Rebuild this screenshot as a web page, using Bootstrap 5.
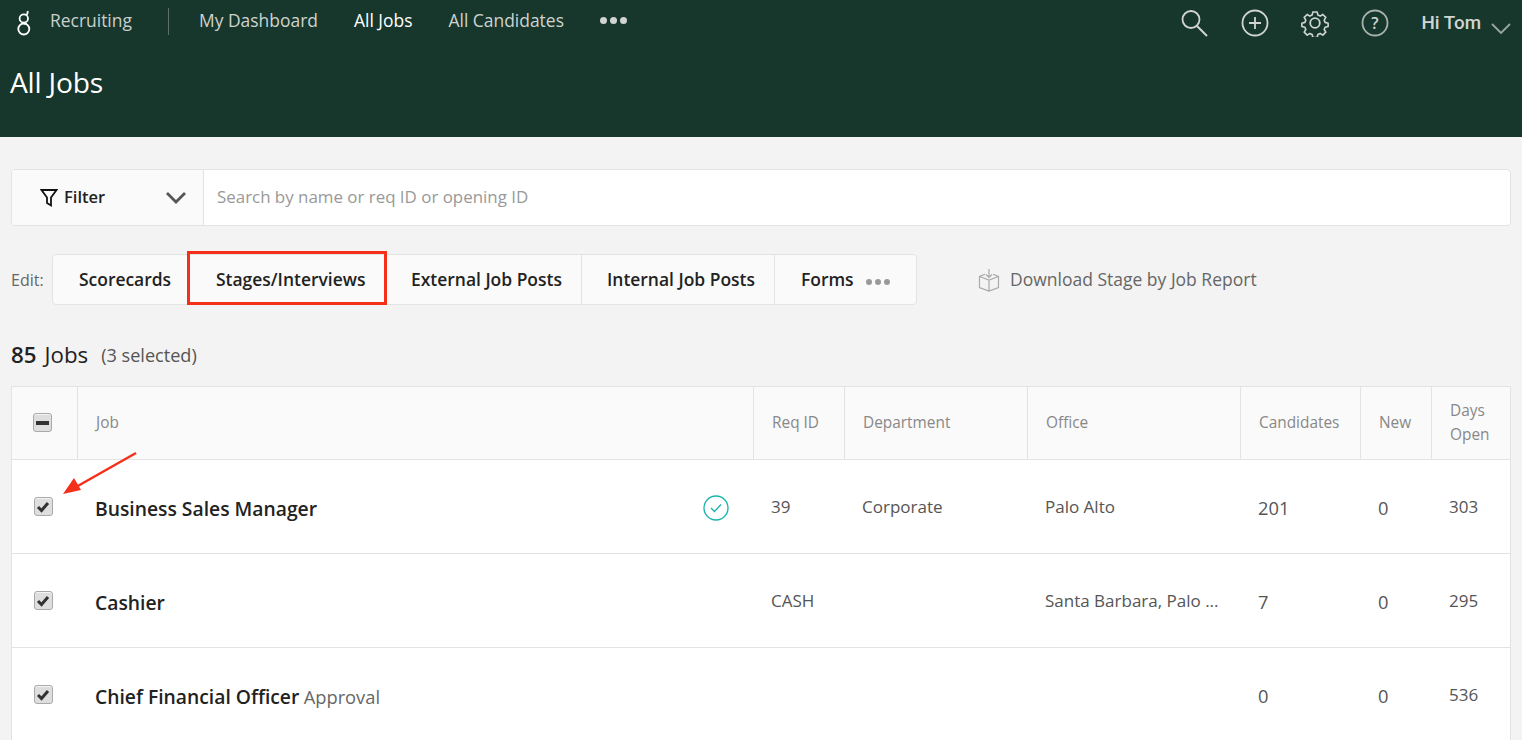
<!DOCTYPE html>
<html lang="en">
<head>
<meta charset="utf-8">
<title>All Jobs</title>
<link href="https://cdn.jsdelivr.net/npm/bootstrap@5.3.0/dist/css/bootstrap.min.css" rel="stylesheet">
<style>
html,body{height:740px;overflow:hidden}
body{background:#f3f3f3;font-family:"Open Sans",sans-serif;color:#222;position:relative}
.gh-head{background:#17372c;height:137px;padding:0 10px}
.gh-top{height:41px;color:#d0d5d2;font-size:17.45px}
.gh-logo{margin:0 0 0 7px;width:14px;height:30px}
.gh-app{margin-left:19px;width:118px;color:#c9cfcc}
.gh-sep{width:1px;height:27px;background:#5a6f67;margin:1px 30px 0 0}
.gh-link{color:#ced3d0;text-decoration:none;margin-right:36px}
.gh-link.is-on{color:#fff}
.gh-dots{display:flex;gap:3px;margin-top:-1px}
.gh-dots i{width:7px;height:7px;border-radius:50%;background:#d0d5d2}
.gh-hi{font-family:Roboto,sans-serif;font-weight:500;font-size:18.8px;color:#d0d5d2;margin-left:32px;margin-right:1px;margin-top:5px}
.gh-title{font-size:28.2px;line-height:36px;color:#fff;margin-top:23px;letter-spacing:-.2px}
.gh-tools{gap:32px;margin-top:4px}
.gh-main{padding:32px 11px 0 11px}
.gh-search{height:57px;background:#fff;border:1px solid #e3e3e3;border-radius:4px;overflow:hidden}
.gh-filter{width:192px;background:#fafafa;border-right:1px solid #e3e3e3;padding:0 16px 0 28px;font-weight:600;font-size:16.5px;color:#222}
.gh-funnel{margin-right:6px}
.gh-ph{padding:0 0 2px 13px;color:#999;font-size:16.9px}
.gh-editrow{margin-top:28px;height:51px}
.gh-edit-label{width:41px;font-size:16px;color:#666}
.gh-tabs{height:51px;background:#fafafa;border:1px solid #e3e3e3;border-radius:4px;font-weight:600;font-size:17.45px;color:#222}
.gh-tab{display:flex;align-items:center;height:100%;border-right:1px solid #e3e3e3;white-space:nowrap}
.gh-tab.t-a{width:135px;padding-left:26px;border-right:0}
.gh-tab.t-b{width:198px;padding:3px 0 0 28px;outline:3px solid #f5301a;outline-offset:-2px;height:52px;border:0;z-index:1;align-self:flex-start;margin-top:-3px}
.gh-tab.t-c{width:196px;padding-left:25px}
.gh-tab.t-d{width:193px;padding-left:25px}
.gh-tab.t-e{width:141px;padding-left:26px;border:0;gap:12px}
.gh-dots.g-s{gap:3px;margin-top:4px}
.gh-dots.g-s i{background:#999;width:6px;height:6px}
.gh-dl{margin-left:61px;font-size:17.5px;color:#666;gap:10px}
.gh-count{margin-top:34px;height:32px;font-size:22.300px;color:#222}
.gh-count b{font-weight:600;margin-right:8px}
.gh-count span{font-size:18.100px;color:#555;margin-left:13px;margin-top:2px}
.gh-table{table-layout:fixed;width:1498px;margin:15px 0 0 0;background:#fff;border:1px solid #e3e3e3;border-collapse:separate;border-spacing:0;--bs-table-bg:transparent}
.gh-table th{background:#fafafa;height:73px;font-weight:400;font-size:15.4px;line-height:24px;color:#888;border-right:1px solid #e3e3e3;border-bottom:1px solid #e3e3e3;padding:0 0 0 18px;vertical-align:middle}
.gh-table th:last-child{border-right:0}
.gh-table td{height:94px;border-bottom:1px solid #e3e3e3;padding:0 0 0 17px;vertical-align:middle;font-size:17px;color:#555;white-space:nowrap;overflow:hidden}
.gh-table td.gh-num{font-size:18.3px}
.gh-table td.gh-check,.gh-table th.gh-check{padding:0 4px 0 0;text-align:center}
.gh-table th.gh-check{padding-bottom:6px}
.gh-name{display:inline-block;padding-top:6px;font-weight:600;font-size:19.3px;color:#222}
.gh-sub{font-size:18.3px;color:#666}
.gh-jobcell{display:flex;align-items:center;justify-content:space-between;padding-right:25px}
.gh-tick{margin-top:2px}
.gh-box{display:inline-flex;width:19px;height:19px;border-radius:3px;background:#dedede;border:1px solid #aaa;align-items:center;justify-content:center;box-shadow:inset 0 1px 0 #f4f4f4}
.gh-trunc{display:block;white-space:nowrap}
.gh-arrow{position:absolute;left:60px;top:450px}
.gh-shift{position:relative;top:1px}
</style>
</head>
<body>
<header class="gh-head">
  <div class="gh-top d-flex align-items-center">
    <svg class="gh-logo" viewBox="0 0 14 30" fill="none" stroke="#fff" stroke-width="1.800"><circle cx="6.800" cy="12.500" r="4.200"/><circle cx="6.800" cy="23" r="5.500"/><path d="M6.800 16.700c3 .6 3 1 0 1M9 9.200c1.500-1 2-2 1.600-4.200"/></svg>
    <div class="gh-app">Recruiting</div>
    <div class="gh-sep"></div>
    <a class="gh-link" href="#">My Dashboard</a>
    <a class="gh-link is-on" href="#">All Jobs</a>
    <a class="gh-link" href="#">All Candidates</a>
    <div class="gh-dots"><i></i><i></i><i></i></div>
    <div class="ms-auto d-flex align-items-center gh-tools">
      <svg width="30" height="30" viewBox="0 0 30 30" fill="none" stroke="#d0d5d2" stroke-width="1.800"><circle cx="12" cy="11.500" r="8.500"/><path d="M18 18l10 10" stroke-width="2"/></svg>
      <svg width="28" height="28" viewBox="0 0 28 28" fill="none" stroke="#d0d5d2" stroke-width="1.800"><circle cx="14" cy="14" r="12.500"/><path d="M14 8v12M8 14h12"/></svg>
      <svg width="28" height="28" viewBox="0 0 28 28" fill="none" stroke="#d0d5d2" stroke-width="1.800" stroke-linejoin="round"><circle cx="14" cy="14" r="4.800"/><path d="M11.600 1.800h4.800l.8 3.400 2.500 1.100 3-1.800 3.300 3.300-1.800 3 1 2.500 3.400.9v3.600l-3.400.9-1 2.500 1.800 3-3.300 3.300-3-1.800-2.500 1.100-.8 3.300h-4.800l-.8-3.300-2.500-1.100-3 1.800-3.300-3.300 1.800-3-1-2.500-3.400-.9v-3.600l3.400-.9 1-2.500-1.800-3 3.300-3.300 3 1.800 2.500-1.100z" transform="translate(1.400 1.400) scale(.9)"/></svg>
      <svg width="28" height="28" viewBox="0 0 28 28" fill="none" stroke="#a9b1ad" stroke-width="1.800"><circle cx="14" cy="14" r="12.500"/><text x="14" y="19.500" text-anchor="middle" font-size="16" font-family="Open Sans" font-weight="600" fill="#d0d5d2" stroke="none">?</text></svg>
    </div>
    <div class="gh-hi">Hi Tom</div>
    <svg class="ms-2 mt-3" width="22" height="14" viewBox="0 0 22 14" fill="none" stroke="#9aa5a0" stroke-width="1.800"><path d="M2 2l9 9 9-9"/></svg>
  </div>
  <div class="gh-title">All Jobs</div>
</header>
<main class="gh-main">
  <div class="gh-search d-flex align-items-stretch">
    <div class="gh-filter d-flex align-items-center">
      <svg width="18" height="20" viewBox="0 0 18 20" fill="none" stroke="#111" stroke-width="1.800" class="gh-funnel"><path d="M1.500 2h15l-5.500 7.500v8l-4-2.500v-5.500z"/></svg>
      Filter
      <svg class="ms-auto" width="22" height="14" viewBox="0 0 22 14" fill="none" stroke="#555" stroke-width="2.800"><path d="M2 2l9 9 9-9"/></svg>
    </div>
    <div class="gh-ph d-flex align-items-center flex-grow-1">Search by name or req ID or opening ID</div>
  </div>
  <div class="gh-editrow d-flex align-items-center">
    <div class="gh-edit-label">Edit:</div>
    <div class="gh-tabs d-flex align-items-center">
      <div class="gh-tab t-a">Scorecards</div>
      <div class="gh-tab t-b">Stages/Interviews</div>
      <div class="gh-tab t-c">External Job Posts</div>
      <div class="gh-tab t-d">Internal Job Posts</div>
      <div class="gh-tab t-e">Forms <div class="gh-dots g-s"><i></i><i></i><i></i></div></div>
    </div>
    <div class="gh-dl d-flex align-items-center">
      <svg width="22" height="24" viewBox="0 0 22 24" fill="none" stroke="#aaa" stroke-width="1.200"><path d="M7 6.200L1.500 8.500v11L11 23l9.500-3.500v-11L15 6.200M1.500 8.500L11 12l9.500-3.500M11 12v11M11 1v8M8 6.500L11 9.500l3-3"/></svg>
      Download Stage by Job Report
    </div>
  </div>
  <div class="gh-count d-flex align-items-center"><b>85</b> Jobs <span>(3 selected)</span></div>
  <table class="table gh-table">
    <colgroup><col style="width:66px"><col style="width:676px"><col style="width:91px"><col style="width:183px"><col style="width:213px"><col style="width:120px"><col style="width:71px"><col style="width:78px"></colgroup>
    <thead><tr>
      <th class="gh-check"><span class="gh-box"><svg width="13" height="4" viewBox="0 0 13 4"><rect width="13" height="4" fill="#333"/></svg></span></th>
      <th>Job</th><th>Req ID</th><th>Department</th><th>Office</th><th>Candidates</th><th>New</th><th>Days Open</th>
    </tr></thead>
    <tbody>
      <tr>
        <td class="gh-check"><span class="gh-box"><svg width="14" height="12" viewBox="0 0 14 12" fill="none" stroke="#333" stroke-width="3"><path d="M2 6l3.500 3.500L12 2"/></svg></span></td>
        <td><div class="gh-jobcell"><span class="gh-name">Business Sales Manager</span><svg class="gh-tick" width="26" height="26" viewBox="0 0 26 26" fill="none" stroke="#17b3ad" stroke-width="1.300"><circle cx="13" cy="13" r="12"/><path d="M8 13l3.500 3.500L18 9.500"/></svg></div></td>
        <td>39</td><td>Corporate</td><td>Palo Alto</td><td class="gh-num"><span class="gh-shift">201</span></td><td class="gh-num"><span class="gh-shift">0</span></td><td>303</td>
      </tr>
      <tr>
        <td class="gh-check"><span class="gh-box"><svg width="14" height="12" viewBox="0 0 14 12" fill="none" stroke="#333" stroke-width="3"><path d="M2 6l3.500 3.500L12 2"/></svg></span></td>
        <td><span class="gh-name">Cashier</span></td>
        <td>CASH</td><td></td><td><span class="gh-trunc">Santa Barbara, Palo ...</span></td><td class="gh-num"><span class="gh-shift">7</span></td><td class="gh-num"><span class="gh-shift">0</span></td><td>295</td>
      </tr>
      <tr>
        <td class="gh-check"><span class="gh-box"><svg width="14" height="12" viewBox="0 0 14 12" fill="none" stroke="#333" stroke-width="3"><path d="M2 6l3.500 3.500L12 2"/></svg></span></td>
        <td><span class="gh-name">Chief Financial Officer</span> <span class="gh-sub">Approval</span></td>
        <td></td><td></td><td></td><td class="gh-num"><span class="gh-shift">0</span></td><td class="gh-num"><span class="gh-shift">0</span></td><td>536</td>
      </tr>
    </tbody>
  </table>
</main>
<svg class="gh-arrow" width="80" height="48" viewBox="0 0 80 48"><path d="M76 3L16 37" stroke="#f5301a" stroke-width="2.500" fill="none"/><path d="M3 44l11-16 7 12z" fill="#f5301a"/></svg>
<script src="https://cdn.jsdelivr.net/npm/bootstrap@5.3.0/dist/js/bootstrap.bundle.min.js"></script>
</body>
</html>
